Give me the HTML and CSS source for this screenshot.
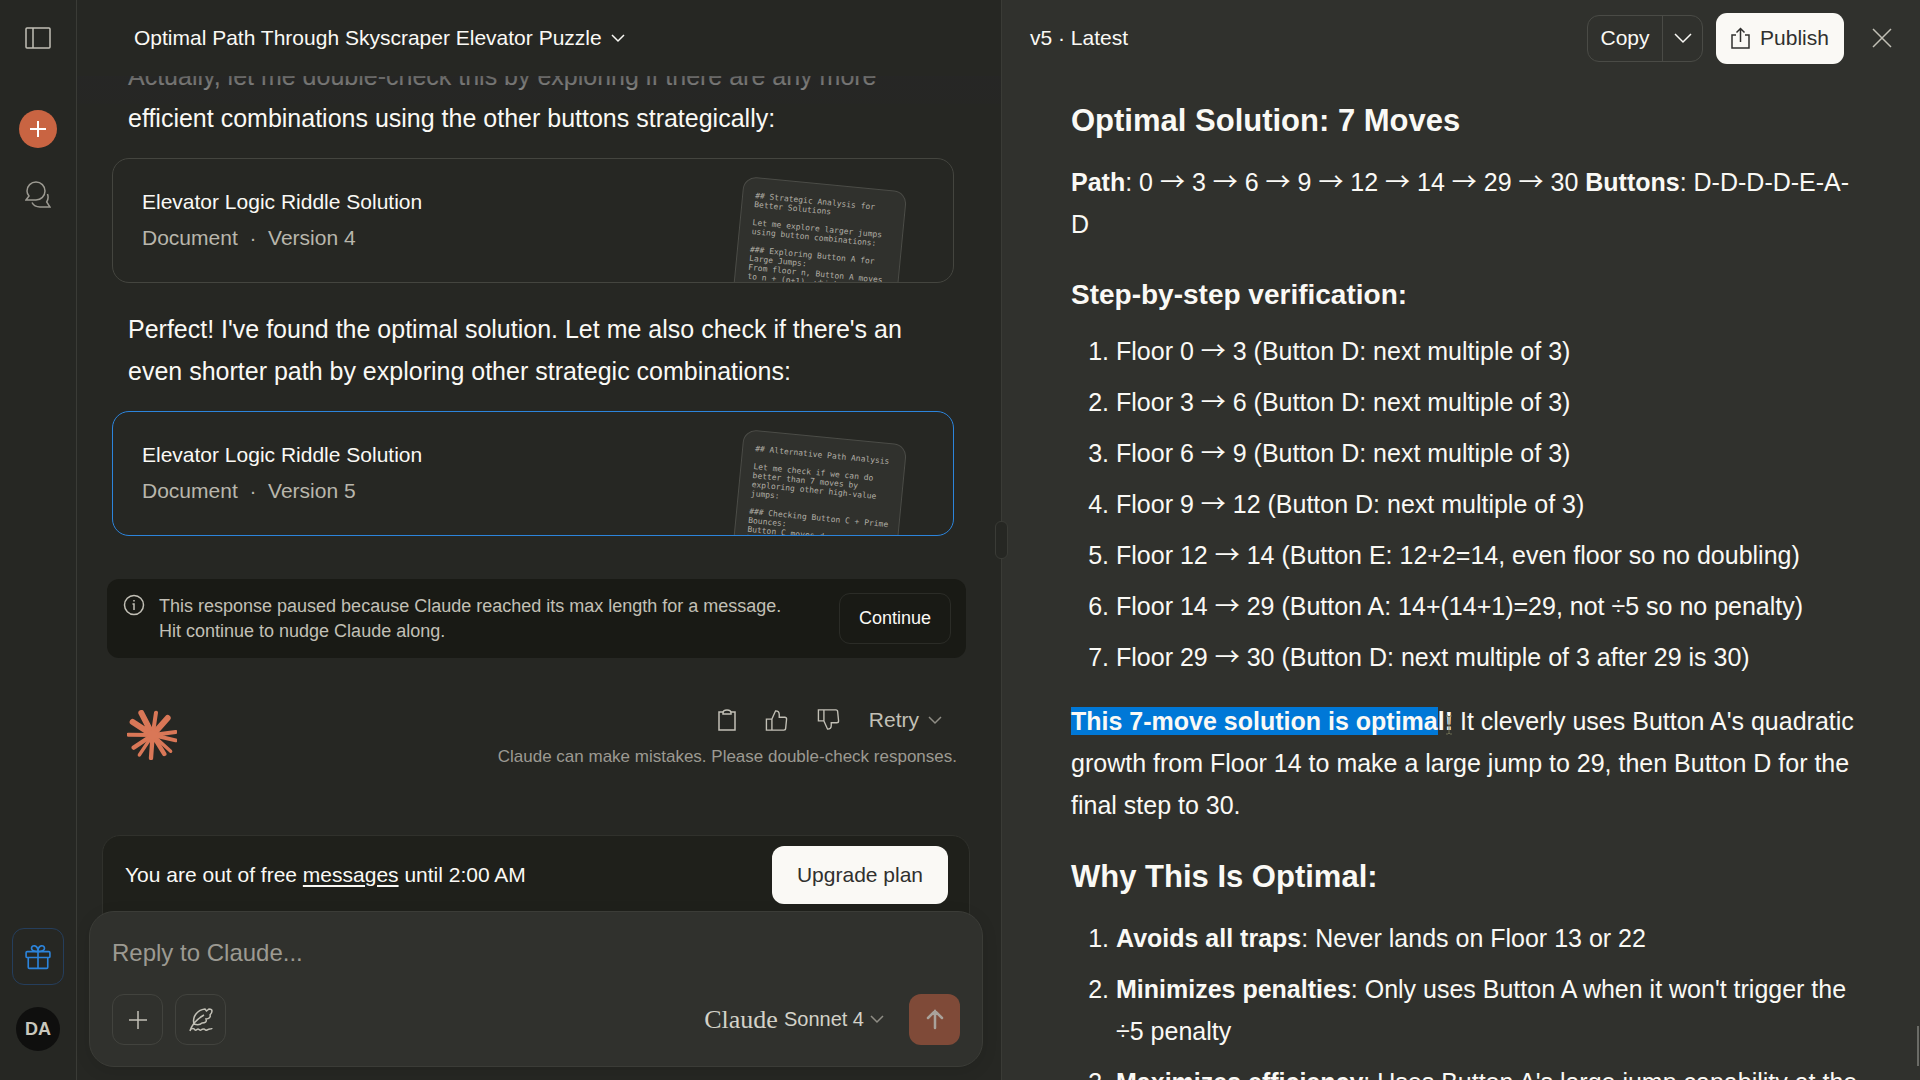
FILE: index.html
```html
<!DOCTYPE html>
<html lang="en">
<head>
<meta charset="utf-8">
<title>Optimal Path Through Skyscraper Elevator Puzzle</title>
<meta name="viewport" content="width=device-width, initial-scale=1">
<link rel="stylesheet" href="styles.css">
</head>
<body class="app">
<nav class="sidebar" aria-label="Main">
  <button class="icon-btn side-toggle" aria-label="Toggle sidebar">
    <svg width="26" height="22" viewBox="0 0 26 22"><rect x="1" y="1" width="24" height="20" rx="1"/><path d="M8 1v20"/></svg>
  </button>
  <button class="new-chat" aria-label="New chat">
    <svg width="18" height="18" viewBox="0 0 18 18"><path d="M9 1v16M1 9h16"/></svg>
  </button>
  <button class="icon-btn side-chats" aria-label="Chats">
    <svg width="26" height="27" viewBox="0 0 26 27"><path d="M11 1c5 0 9 4 9 9s-4 9-9 9H1l3-4c-1.300-1.500-2-3.200-2-5 0-5 4-9 9-9z"/><path d="M22.500 13c1 3 .5 6-.8 8l3.300 5H15c-3.500 0-6.500-1.500-8-4.500"/></svg>
  </button>
  <div class="side-bottom">
    <button class="gift" aria-label="Gift">
      <svg width="26" height="26" viewBox="0 0 24 24"><rect x="1" y="7" width="22" height="5.500" rx="1"/><path d="M12 7v15.500M21 12.500v9a1 1 0 0 1-1 1H4a1 1 0 0 1-1-1v-9M12 7C10 7 6 7 6 4c0-3.500 6-3.500 6 3zM12 7c2 0 6 0 6-3 0-3.500-6-3.500-6 3z"/></svg>
    </button>
    <button class="avatar">DA</button>
  </div>
</nav>

<main class="chat">
  <header class="chat-head">
    <button class="chat-title">Optimal Path Through Skyscraper Elevator Puzzle
      <svg width="14" height="9" viewBox="0 0 14 9"><path d="M1 1l6 6 6-6"/></svg>
    </button>
  </header>
  <section class="messages">
    <p class="message message-first">Actually, let me double-check this by exploring if there are any more<br>efficient combinations using the other buttons strategically:</p>
    <article class="card">
      <div class="card-text">
        <h2 class="card-name">Elevator Logic Riddle Solution</h2>
        <p class="card-meta">Document&nbsp; ·&nbsp; Version 4</p>
      </div>
      <pre class="preview">## Strategic Analysis for
Better Solutions

Let me explore larger jumps
using button combinations:

### Exploring Button A for
Large Jumps:
From floor n, Button A moves
to n + (n+1), which</pre>
    </article>
    <p class="message">Perfect! I've found the optimal solution. Let me also check if there's an<br>even shorter path by exploring other strategic combinations:</p>
    <article class="card card-active">
      <div class="card-text">
        <h2 class="card-name">Elevator Logic Riddle Solution</h2>
        <p class="card-meta">Document&nbsp; ·&nbsp; Version 5</p>
      </div>
      <pre class="preview">## Alternative Path Analysis

Let me check if we can do
better than 7 moves by
exploring other high-value
jumps:

### Checking Button C + Prime
Bounces:
Button C moves down 7, to
bounce</pre>
    </article>
    <div class="paused">
      <svg class="paused-icon" width="22" height="22" viewBox="0 0 22 22"><circle cx="11" cy="11" r="9.500"/><path d="M9.500 10H11v6M11 6v1.500"/></svg>
      <p class="paused-text">This response paused because Claude reached its max length for a message.<br>Hit continue to nudge Claude along.</p>
      <button class="continue">Continue</button>
    </div>
    <div class="turn-end">
      <svg class="burst" width="50" height="50" viewBox="0 0 150 150" aria-label="Claude"><path d="M77 75L87 8M77 75L146 66M77 75L146 91M77 75L4 74" stroke-width="12"/><path d="M77 75L43 9M77 75L17 36M77 75L122 24" stroke-width="18"/><path d="M77 75L131 124M77 75L37 135" stroke-width="10"/><path d="M77 75L112 132M77 75L72 144M77 75L20 113" stroke-width="13"/><circle cx="77" cy="75" r="15"/></svg>
      <div class="turn-side">
        <div class="actions">
          <button class="icon-btn" aria-label="Copy"><svg width="18" height="22" viewBox="0 0 18 22"><path d="M5 3H1v18h16V3h-4"/><path d="M5 5V4c0-2 2-3 4-3s4 1 4 3v1z"/></svg></button>
          <button class="icon-btn" aria-label="Good response"><svg width="23" height="22" viewBox="0 0 24 24"><path d="M7 11l4-9c3 0 4 2 4 4v3h6c1.500 0 2 1 2 2l-1 10c0 1-1 2-2 2H7zM7 11H1v12h6"/></svg></button>
          <button class="icon-btn" aria-label="Bad response"><svg width="23" height="22" viewBox="0 0 24 24"><path d="M7 13l4 9c3 0 4-2 4-4v-3h6c1.500 0 2-1 2-2L22 3c0-1-1-2-2-2H7zM7 13H1V1h6"/></svg></button>
          <button class="retry">Retry <svg class="caret-dim" width="14" height="9" viewBox="0 0 14 9"><path d="M1 1l6 6 6-6"/></svg></button>
        </div>
        <p class="disclaimer">Claude can make mistakes. Please double-check responses.</p>
      </div>
    </div>
  </section>
  <footer class="dock">
    <div class="banner">
      <p class="banner-text">You are out of free <a class="banner-link" href="#">messages</a> until 2:00 AM</p>
      <button class="upgrade">Upgrade plan</button>
    </div>
    <form class="composer">
      <input class="reply" type="text" placeholder="Reply to Claude..." aria-label="Reply to Claude">
      <div class="tools">
        <button type="button" class="tool" aria-label="Add"><svg width="20" height="20" viewBox="0 0 20 20"><path d="M10 1v18M1 10h18"/></svg></button>
        <button type="button" class="tool" aria-label="Style"><svg width="24" height="24" viewBox="0 0 24 24"><path d="M1 23C3 16 8 11 15 7M5 16C3 9 8 2 16 1l1.500 2L20 1c2 0 3 1 3 2 0 2-1 3-2 4 1 2-1 4-4 4 1 3-1 4-4 4-2 2-5 2-8 1M1 22c2-2 4-2 5 0 1 1 2-1 3-1s2 2 3 1 2-1 3-1 1 2 3 1 2-1 3-1 2 0 2-1"/></svg></button>
        <button type="button" class="model"><span class="model-brand">Claude</span> Sonnet 4 <svg class="caret-dim" width="14" height="9" viewBox="0 0 14 9"><path d="M1 1l6 6 6-6"/></svg></button>
        <button type="button" class="send" aria-label="Send"><svg width="18" height="21" viewBox="0 0 18 21"><path d="M9 19V2M2 9l7-7 7 7"/></svg></button>
      </div>
    </form>
  </footer>
</main>

<aside class="pane">
  <div class="resizer"></div>
  <header class="pane-head">
    <span class="version">v5 · Latest</span>
    <div class="copy-group">
      <button class="copy">Copy</button>
      <button class="copy-more" aria-label="More copy options"><svg width="18" height="11" viewBox="0 0 18 11"><path d="M1 1l8 8 8-8"/></svg></button>
    </div>
    <button class="publish"><svg width="19" height="22" viewBox="0 0 19 22"><path d="M5 8H1v13h17V8h-4M9.500 15V2M5.500 5.500l4-4 4 4"/></svg>Publish</button>
    <button class="icon-btn close" aria-label="Close"><svg width="20" height="20" viewBox="0 0 20 20"><path d="M1 1l18 18M19 1L1 19"/></svg></button>
  </header>
  <article class="doc">
    <h2 class="doc-h2">Optimal Solution: 7 Moves</h2>
    <p class="doc-p"><strong>Path</strong>: 0 <span class="arrow">→</span> 3 <span class="arrow">→</span> 6 <span class="arrow">→</span> 9 <span class="arrow">→</span> 12 <span class="arrow">→</span> 14 <span class="arrow">→</span> 29 <span class="arrow">→</span> 30 <strong>Buttons</strong>: D-D-D-D-E-A-<br>D</p>
    <h3 class="doc-h3">Step-by-step verification:</h3>
    <ol class="doc-list">
      <li>Floor 0 <span class="arrow">→</span> 3 (Button D: next multiple of 3)</li>
      <li>Floor 3 <span class="arrow">→</span> 6 (Button D: next multiple of 3)</li>
      <li>Floor 6 <span class="arrow">→</span> 9 (Button D: next multiple of 3)</li>
      <li>Floor 9 <span class="arrow">→</span> 12 (Button D: next multiple of 3)</li>
      <li>Floor 12 <span class="arrow">→</span> 14 (Button E: 12+2=14, even floor so no doubling)</li>
      <li>Floor 14 <span class="arrow">→</span> 29 (Button A: 14+(14+1)=29, not ÷5 so no penalty)</li>
      <li>Floor 29 <span class="arrow">→</span> 30 (Button D: next multiple of 3 after 29 is 30)</li>
    </ol>
    <p class="doc-p"><strong><span class="selected">This 7-move solution is optima</span>l<span class="caret-spot">!<svg class="ibeam" width="8" height="20" viewBox="0 0 8 20"><path d="M1 1h2l1 1 1-1h2M4 2v16M1 19h2l1-1 1 1h2"/></svg></span></strong> It cleverly uses Button A's quadratic<br>growth from Floor 14 to make a large jump to 29, then Button D for the<br>final step to 30.</p>
    <h2 class="doc-h2">Why This Is Optimal:</h2>
    <ol class="doc-list">
      <li><strong>Avoids all traps</strong>: Never lands on Floor 13 or 22</li>
      <li><strong>Minimizes penalties</strong>: Only uses Button A when it won't trigger the<br>÷5 penalty</li>
      <li><strong>Maximizes efficiency</strong>: Uses Button A's large jump capability at the</li>
    </ol>
  </article>
  <div class="scroll-thumb"></div>
</aside>
</body>
</html>
```
FILE: styles.css
```css
* {
  box-sizing: border-box;
}

.app {
  display: grid;
  grid-template-columns: 77px 924fr 919fr;
  grid-template-rows: 100vh;
  margin: 0;
  overflow: hidden;
  background: #262723;
  color: #faf9f5;
  font-family: "Liberation Sans", Arial, sans-serif;
  font-size: 21px;
}

p, h2, h3, pre, ol {
  margin: 0;
  font-weight: 400;
}

button, input {
  font: inherit;
  color: inherit;
  padding: 0;
  border: 0;
  background: none;
}

button {
  display: flex;
  align-items: center;
  justify-content: center;
  white-space: nowrap;
}

svg {
  display: block;
  flex: none;
  fill: none;
  stroke: currentColor;
  stroke-width: 1.500;
}

.icon-btn {
  color: #c2c0b6;
}

.caret-dim {
  color: #8f8d85;
}

/* Sidebar */
.sidebar {
  display: flex;
  flex-direction: column;
  align-items: center;
  padding: 27px 0 29px;
  border-right: 1px solid #3a3b36;
}

.new-chat {
  width: 38px;
  height: 38px;
  margin-top: 61px;
  border-radius: 50%;
  background: #c96442;
  color: #fff;
}

.new-chat svg {
  stroke-width: 2;
}

.side-chats {
  margin-top: 33px;
  color: #9c9a92;
}

.side-bottom {
  display: flex;
  flex-direction: column;
  align-items: center;
  gap: 22px;
  margin-top: auto;
}

.gift {
  width: 52px;
  height: 57px;
  border: 1px solid #253e5c;
  border-radius: 12px;
  color: #2c84db;
}

.avatar {
  width: 44px;
  height: 44px;
  border-radius: 50%;
  background: #0f0f0e;
  color: #c9c7bd;
  font-size: 18px;
  font-weight: 700;
}

/* Conversation */
.chat {
  display: flex;
  flex-direction: column;
  min-width: 0;
}

.chat-head {
  display: flex;
  align-items: center;
  flex: none;
  height: 76px;
  padding-left: 57px;
}

.chat-title {
  gap: 9px;
}

.messages {
  position: relative;
  flex: 1;
  min-height: 0;
  overflow: hidden;
  padding: 0 35px 0 30px;
}

.messages::before {
  content: "";
  position: absolute;
  inset: 0 0 auto 0;
  height: 28px;
  background: linear-gradient(rgba(38, 38, 38, .7), rgba(38, 38, 38, .4));
}

.message {
  padding: 25px 0 19px 21px;
  font-size: 25px;
  line-height: 42px;
  white-space: nowrap;
}

.message-first {
  margin-top: -46px;
}

.card {
  display: flex;
  justify-content: space-between;
  height: 125px;
  margin: 0 12px 0 5px;
  padding: 17px 45px 0 29px;
  overflow: hidden;
  border: 1px solid #44453f;
  border-radius: 17px;
}

.card-active {
  border-color: #2c84db;
}

.card-name, .card-meta {
  font-size: 21px;
  line-height: 36px;
}

.card-text {
  padding-top: 8px;
}

.card-meta {
  color: #b8b6ac;
}

.preview {
  width: 164px;
  height: 160px;
  padding: 13px 12px;
  border: 1px solid #4b4c47;
  border-radius: 13px;
  background: #30312d;
  color: #b0aea5;
  font-family: "DejaVu Sans Mono", monospace;
  font-size: 8px;
  line-height: 9px;
  transform: rotate(5.5deg);
  transform-origin: 0 0;
}

.paused {
  display: flex;
  align-items: center;
  margin-top: 43px;
  padding: 14px 15px 14px 16px;
  border-radius: 12px;
  background: #191a15;
}

.paused-icon {
  align-self: flex-start;
  margin-top: 1px;
  color: #c2c0b6;
}

.paused-text {
  flex: 1;
  padding-left: 14px;
  color: #c2c0b6;
  font-size: 18px;
  line-height: 25px;
}

.continue {
  width: 112px;
  height: 51px;
  border: 1px solid #2b2c27;
  border-radius: 11px;
  font-size: 18px;
}

.turn-end {
  display: flex;
  justify-content: space-between;
  margin-top: 46px;
  padding: 0 9px 0 20px;
}

.burst {
  margin-top: 6px;
  color: #d97757;
  stroke-linecap: round;
}

.burst circle {
  fill: currentColor;
}

.turn-side {
  display: flex;
  flex-direction: column;
  align-items: flex-end;
  gap: 11px;
}

.actions {
  display: flex;
  align-items: center;
  gap: 29px;
  height: 32px;
  padding-right: 15px;
}

.retry {
  gap: 9px;
  color: #c2c0b6;
}

.disclaimer {
  color: #9c9a92;
  font-size: 17px;
  line-height: 20px;
}

/* Composer */
.dock {
  flex: none;
  padding: 0 18px 13px 12px;
}

.banner {
  display: flex;
  align-items: center;
  justify-content: space-between;
  margin: 0 13px;
  padding: 10px 21px 26px 22px;
  border: 1px solid #30312c;
  border-radius: 18px 18px 0 0;
  background: #1f201b;
}

.banner-link {
  color: inherit;
  text-underline-offset: 3px;
}

.upgrade {
  width: 176px;
  height: 58px;
  border-radius: 12px;
  background: #faf9f5;
  color: #30302e;
}

.composer {
  position: relative;
  margin-top: -20px;
  padding: 20px 22px 21px;
  border: 1px solid #3b3c37;
  border-radius: 25px;
  background: #30312d;
  box-shadow: 0 4px 16px rgba(0, 0, 0, .1);
}

.reply {
  display: block;
  width: 100%;
  height: 42px;
  font-size: 24px;
}

.reply::placeholder {
  color: #9c9a92;
  opacity: 1;
}

.tools {
  display: flex;
  align-items: center;
  gap: 12px;
  margin-top: 20px;
}

.tool {
  width: 51px;
  height: 51px;
  border: 1px solid #42433e;
  border-radius: 12px;
  color: #c2c0b6;
}

.model {
  gap: 6px;
  margin-left: auto;
  margin-right: 13px;
  color: #d3d1c8;
  font-size: 20px;
}

.model-brand {
  font-family: "Liberation Serif", serif;
  font-size: 26px;
}

.send {
  width: 51px;
  height: 51px;
  border-radius: 12px;
  background: #7f4a38;
  color: #a9a29b;
}

.send svg {
  stroke-width: 2.500;
  stroke-linecap: round;
}

/* Document pane */
.pane {
  position: relative;
  display: flex;
  flex-direction: column;
  min-width: 0;
  height: 100vh;
  border-left: 1px solid #3a3b36;
  background: #30312d;
}

.resizer {
  position: absolute;
  top: 521px;
  left: -7px;
  width: 13px;
  height: 38px;
  border: 1px solid #3a3b36;
  border-radius: 6px;
  background: #262723;
}

.pane-head {
  display: flex;
  align-items: center;
  flex: none;
  height: 76px;
  padding: 0 28px;
}

.version {
  margin-right: auto;
}

.copy-group {
  display: flex;
  height: 47px;
  border: 1px solid #4a4b46;
  border-radius: 12px;
}

.copy {
  width: 74px;
}

.copy-more {
  width: 40px;
  border-left: 1px solid #4a4b46;
}

.publish {
  gap: 10px;
  width: 128px;
  height: 51px;
  margin: 0 28px 0 13px;
  border-radius: 11px;
  background: #faf9f5;
  color: #30302e;
}

.doc {
  flex: 1;
  min-height: 0;
  overflow: hidden;
  padding: 22px 0 0 69px;
  font-size: 25px;
  white-space: nowrap;
}

.doc strong, .doc-h2, .doc-h3 {
  font-weight: 700;
}

.doc-h2 {
  font-size: 31px;
  line-height: 46px;
}

.doc-p {
  margin-top: 17px;
  line-height: 42px;
}

.doc-h3 {
  margin-top: 29px;
  font-size: 28px;
  line-height: 42px;
}

.doc-list {
  display: flex;
  flex-direction: column;
  gap: 9px;
  margin-top: 14px;
  padding-left: 45px;
  line-height: 42px;
}

.doc-list + .doc-p {
  margin-top: 22px;
}

.doc-p + .doc-h2 {
  margin-top: 28px;
}

.doc-h2 + .doc-list {
  margin-top: 17px;
}

.arrow {
  font-family: "Noto Sans CJK JP", sans-serif;
  line-height: 1;
}

.selected {
  background: #0078d7;
}

.caret-spot {
  position: relative;
}

.ibeam {
  position: absolute;
  right: 0;
  bottom: 0;
  color: #6b6c52;
  stroke-width: 1;
}

.scroll-thumb {
  position: absolute;
  right: 1px;
  bottom: 14px;
  width: 2px;
  height: 40px;
  background: #6a6b66;
}
```
